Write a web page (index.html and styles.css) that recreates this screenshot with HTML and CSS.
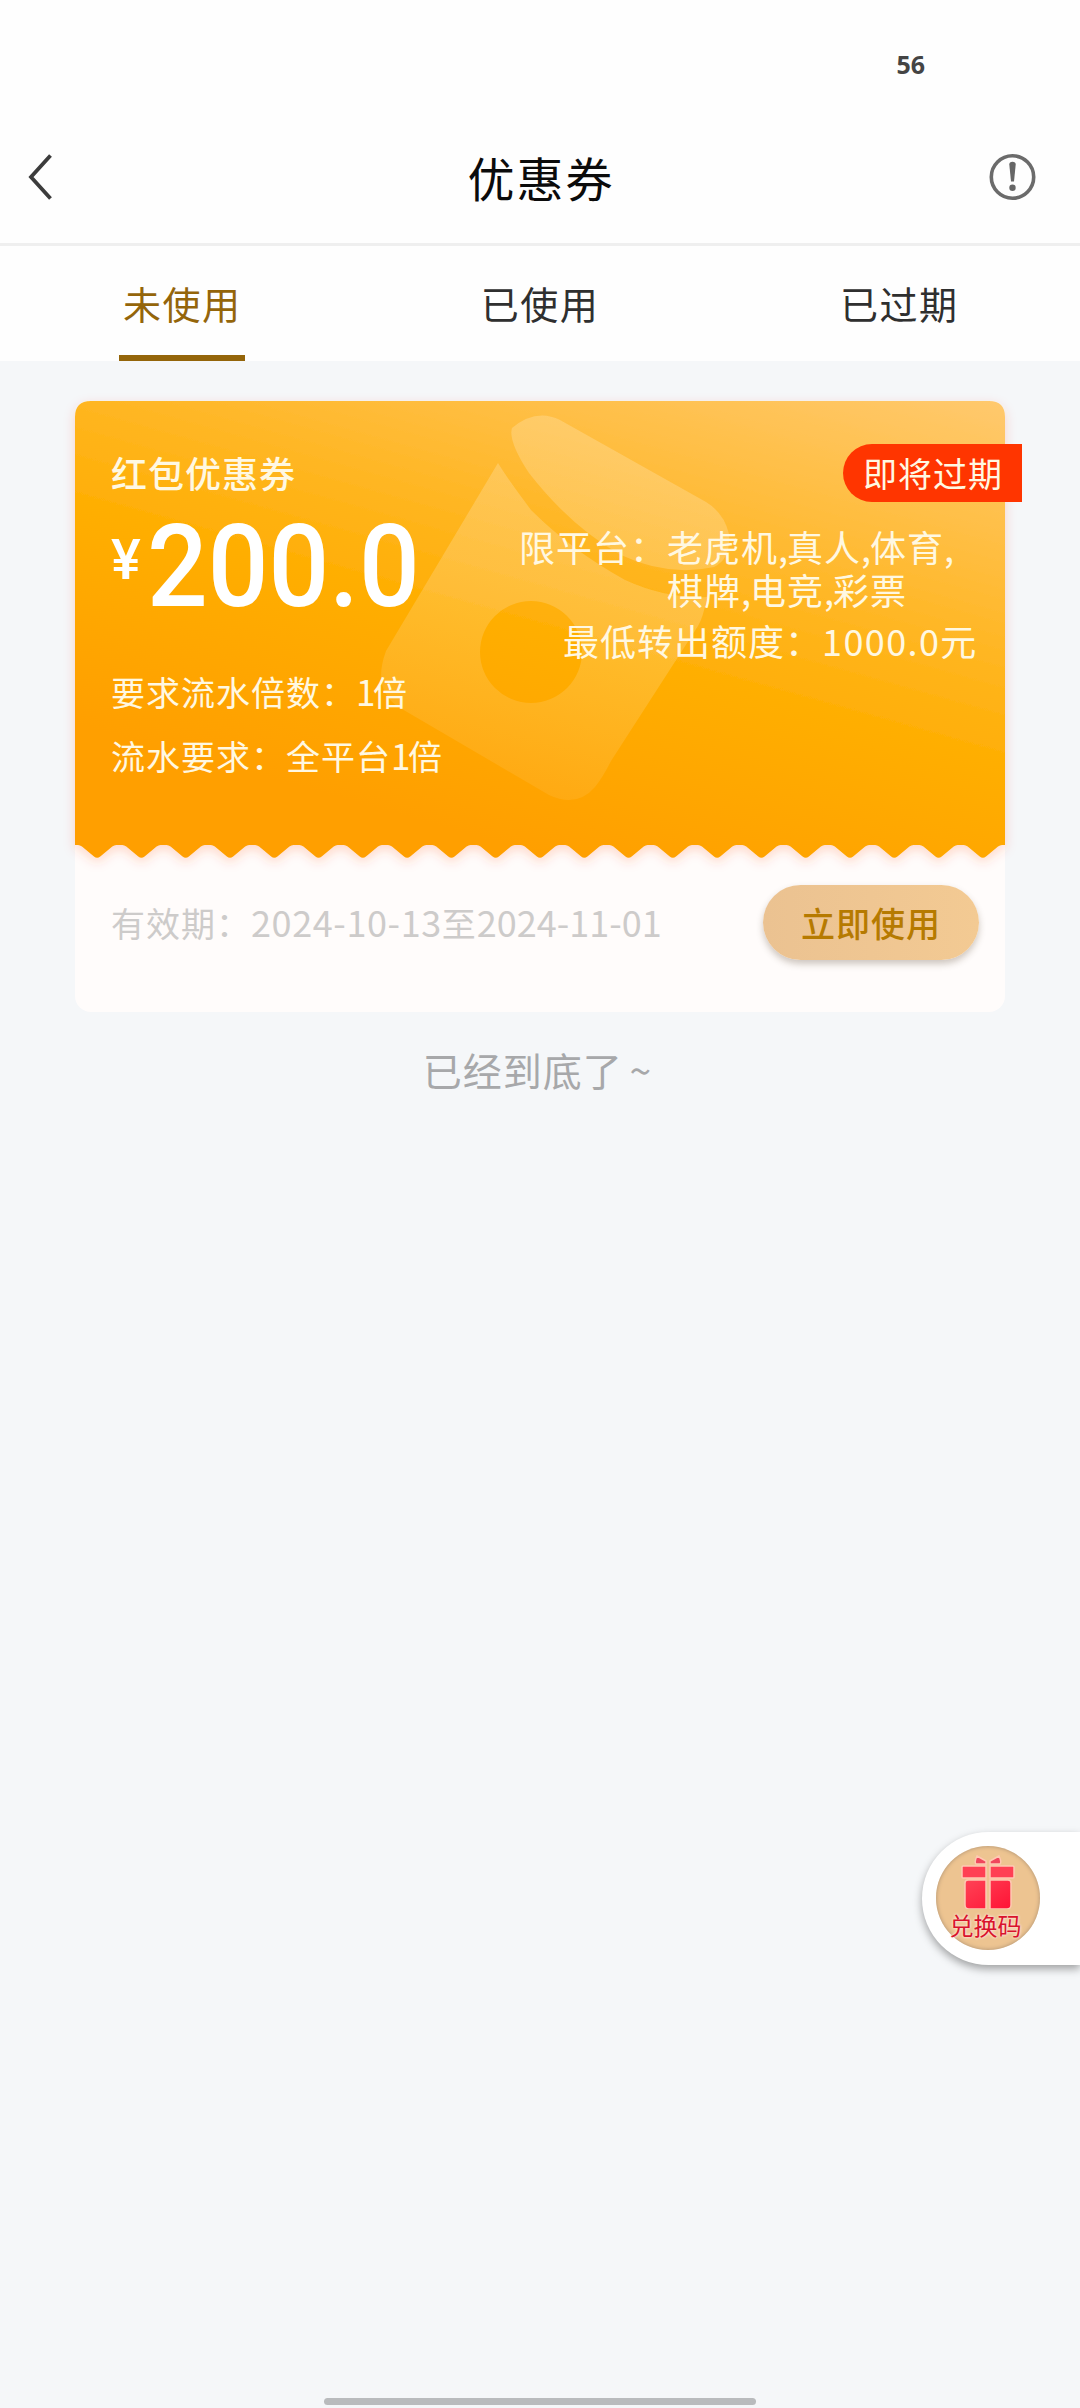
FILE: index.html
```html
<!DOCTYPE html>
<html lang="zh-CN">
<head>
<meta charset="utf-8">
<title>优惠券</title>
<link rel="stylesheet" href="styles.css">
</head>
<body>
<div class="status"><span class="status-value">56</span></div>
<header class="nav">
  <svg class="back" width="26" height="50" viewBox="0 0 26 50"><path d="M23.500 3.500 4 25 23.500 46.500" fill="none" stroke="#3c3c3c" stroke-width="3.800"/></svg>
  <h1 class="nav-title">优惠券</h1>
  <svg class="info" width="50" height="50" viewBox="0 0 50 50"><circle cx="25.500" cy="25" r="21.200" fill="none" stroke="#6b6b6b" stroke-width="3.600"/><path d="M22.300 12.500Q22.300 9.800 25.500 9.800T28.700 12.500L27 29.500H24Z" fill="#666"/><circle cx="25.500" cy="35.800" r="3.200" fill="#666"/></svg>
</header>
<nav class="tabs">
  <a class="tab tab-active"><span>未使用</span></a>
  <a class="tab"><span>已使用</span></a>
  <a class="tab"><span>已过期</span></a>
</nav>
<main class="list">
  <article class="coupon">
    <div class="face">
      <svg class="art" width="960" height="500" viewBox="60 386 960 500">
        <defs>
          <linearGradient id="face" gradientUnits="userSpaceOnUse" x1="1005" y1="401" x2="820" y2="1061">
            <stop offset="0" stop-color="#ffc96e"/><stop offset=".515" stop-color="#ffae02"/><stop offset=".82" stop-color="#ff9f00"/>
          </linearGradient>
          <linearGradient id="env" gradientUnits="userSpaceOnUse" x1="600" y1="416" x2="500" y2="800">
            <stop offset="0" stop-color="#fff" stop-opacity=".2"/><stop offset=".45" stop-color="#ffe2b0" stop-opacity=".28"/><stop offset="1" stop-color="#ffe2b0" stop-opacity=".09"/>
          </linearGradient>
          <filter id="glow" x="-5%" y="-5%" width="110%" height="112%"><feDropShadow dx="0" dy="4" stdDeviation="6" flood-color="#ff4a10" flood-opacity=".2"/></filter>
        </defs>
        <path filter="url(#glow)" fill="url(#face)" d="M75 845V417Q75 401 91 401H989Q1005 401 1005 417V845
          h-3q-2 0-4 1.500l-12 10q-3.143 2.600-6.286 0l-12-10q-2-1.500-4-1.500h-3
          h-3q-2 0-4 1.500l-12 10q-3.143 2.600-6.286 0l-12-10q-2-1.500-4-1.500h-3
          h-3q-2 0-4 1.500l-12 10q-3.143 2.600-6.286 0l-12-10q-2-1.500-4-1.500h-3
          h-3q-2 0-4 1.500l-12 10q-3.143 2.600-6.286 0l-12-10q-2-1.500-4-1.500h-3
          h-3q-2 0-4 1.500l-12 10q-3.143 2.600-6.286 0l-12-10q-2-1.500-4-1.500h-3
          h-3q-2 0-4 1.500l-12 10q-3.143 2.600-6.286 0l-12-10q-2-1.500-4-1.500h-3
          h-3q-2 0-4 1.500l-12 10q-3.143 2.600-6.286 0l-12-10q-2-1.500-4-1.500h-3
          h-3q-2 0-4 1.500l-12 10q-3.143 2.600-6.286 0l-12-10q-2-1.500-4-1.500h-3
          h-3q-2 0-4 1.500l-12 10q-3.143 2.600-6.286 0l-12-10q-2-1.500-4-1.500h-3
          h-3q-2 0-4 1.500l-12 10q-3.143 2.600-6.286 0l-12-10q-2-1.500-4-1.500h-3
          h-3q-2 0-4 1.500l-12 10q-3.143 2.600-6.286 0l-12-10q-2-1.500-4-1.500h-3
          h-3q-2 0-4 1.500l-12 10q-3.143 2.600-6.286 0l-12-10q-2-1.500-4-1.500h-3
          h-3q-2 0-4 1.500l-12 10q-3.143 2.600-6.286 0l-12-10q-2-1.500-4-1.500h-3
          h-3q-2 0-4 1.500l-12 10q-3.143 2.600-6.286 0l-12-10q-2-1.500-4-1.500h-3
          h-3q-2 0-4 1.500l-12 10q-3.143 2.600-6.286 0l-12-10q-2-1.500-4-1.500h-3
          h-3q-2 0-4 1.500l-12 10q-3.143 2.600-6.286 0l-12-10q-2-1.500-4-1.500h-3
          h-3q-2 0-4 1.500l-12 10q-3.143 2.600-6.286 0l-12-10q-2-1.500-4-1.500h-3
          h-3q-2 0-4 1.500l-12 10q-3.143 2.600-6.286 0l-12-10q-2-1.500-4-1.500h-3
          h-3q-2 0-4 1.500l-12 10q-3.143 2.600-6.286 0l-12-10q-2-1.500-4-1.500h-3
          h-3q-2 0-4 1.500l-12 10q-3.143 2.600-6.286 0l-12-10q-2-1.500-4-1.500h-3
          h-3q-2 0-4 1.500l-12 10q-3.143 2.600-6.286 0l-12-10q-2-1.500-4-1.500h-3Z"/>
        <path d="M512 428Q536 408 560 420L706 502Q724 513 729 534Q731 559 714 567Q668 577 621 555Q571 527 529 473Q508 441 512 428Z" fill="url(#env)"/>
        <path fill-rule="evenodd" d="M498 463 386 651Q371 692 402 709L549 795Q577 808 595 787Q603 777 611 761L698 626Q703 618 707 597Q667 599 625 580Q571 550 531 510Q507 478 498 463ZM480 652A51 51 0 1 0 582 652A51 51 0 1 0 480 652Z" fill="url(#env)"/>
      </svg>
      <div class="left">
        <h2 class="name">红包优惠券</h2>
        <p class="amount"><span class="yen">¥</span><span class="value">200.0</span></p>
        <p class="rule">要求流水倍数：<b>1</b>倍</p>
        <p class="rule rule-last">流水要求：全平台<b>1</b>倍</p>
      </div>
      <div class="right">
        <div class="limit"><span>限平台：</span><span>老虎机<i>,</i>真人<i>,</i>体育<i>,</i><br>棋牌<i>,</i>电竞<i>,</i>彩票</span></div>
        <p class="minimum">最低转出额度：<b>1000.0</b>元</p>
      </div>
      <span class="badge">即将过期</span>
    </div>
    <div class="foot">
      <span class="valid">有效期：<b>2024-10-13</b>至<b class="until">2024-11-01</b></span>
      <button class="use">立即使用</button>
    </div>
  </article>
  <p class="end">已经到底了 ~</p>
</main>
<aside class="redeem">
  <div class="redeem-disc">
    <svg width="60" height="54" viewBox="0 0 60 54">
      <defs><linearGradient id="gift" x1="0" y1="0" x2="1" y2="1"><stop offset="0" stop-color="#ff4356"/><stop offset="1" stop-color="#ff1335"/></linearGradient></defs>
      <g stroke="#ffc8b2" stroke-width="1.500">
        <path d="M19 1 28 6V9H18Q16 7 19 1ZM41 1 32 6V9H42Q44 7 41 1Z" fill="#f0475d"/>
        <path d="M5 11H28V23H5Q4 23 4 22V12Q4 11 5 11ZM32 11H55Q56 11 56 12V22Q56 23 55 23H32Z" fill="#ff4054"/>
        <path d="M10 25H28V54H11Q7 54 7 50V28Q7 25 10 25ZM32 25H50Q53 25 53 28V50Q53 54 49 54H32Z" fill="url(#gift)"/>
      </g>
    </svg>
    <span class="redeem-label">兑换码</span>
  </div>
</aside>
<div class="home-bar"></div>
</body>
</html>
```
FILE: styles.css
```css
* { box-sizing: border-box; margin: 0; padding: 0; }
body {
  position: relative;
  width: 1080px;
  height: 2408px;
  overflow: hidden;
  background: #f5f7f9;
  color: #2f2f2f;
  font-family: "Noto Sans CJK SC", sans-serif;
}
.status { height: 110px; background: #fefefe; padding: 48px 155px 0 0; text-align: right; }
.status-value { display: block; font: bold 25px/32px "Noto Sans", sans-serif; color: #444; }
.nav {
  height: 136px;
  padding: 0 43px 0 27px;
  display: grid;
  grid-template-columns: 60px 1fr 60px;
  align-items: center;
  background: #fefefe;
  border-bottom: 3px solid #efefef;
}
.nav svg { display: block; }
.info { justify-self: end; }
.nav-title { padding-left: 18px; text-align: center; font-size: 47px; font-weight: 400; line-height: 60px; letter-spacing: 2px; color: #0b0b0b; }
.tabs { display: grid; grid-template-columns: repeat(3, 1fr); height: 115px; padding: 0 1px; background: #fefefe; }
.tab { display: flex; justify-content: center; }
.tab span { height: 115px; line-height: 114px; font-size: 38px; letter-spacing: 1.5px; }
.tab-active span { width: 126px; margin-left: 3px; text-align: center; color: #94650a; border-bottom: 6px solid #94650a; }
.list { padding-top: 40px; }
.coupon { width: 930px; margin-left: 75px; background: #fffcfb; border-radius: 16px; }
.face { position: relative; height: 457px; display: flex; color: #fff8e2; }
.art { position: absolute; left: -15px; top: -15px; }
.left, .right { position: relative; }
.left { width: 400px; padding: 47px 0 0 36px; }
.name { font-size: 36px; line-height: 48px; font-weight: 500; letter-spacing: 1px; }
.amount { display: flex; height: 142px; font: 500 115px/141px Roboto, sans-serif; color: #fff; white-space: nowrap; }
.value { transform: scaleX(.93); transform-origin: 0 0; }
.yen { width: 36px; font-size: 56px; line-height: 129px; }
.rule { margin-top: 29px; font-size: 34px; line-height: 50px; letter-spacing: 1px; white-space: nowrap; }
.rule-last { margin-top: 14px; }
.rule b, .valid b, .minimum b { font-size: 36px; font-weight: 400; line-height: 1; }
.rule b { font-size: 35px; letter-spacing: -2.5px; }
.valid b { letter-spacing: .6px; }
.valid .until { letter-spacing: 0; }
.minimum b { letter-spacing: 1.4px; }
.right { width: 530px; padding-top: 124px; }
.limit { display: flex; margin-left: 44px; font-size: 36px; line-height: 43px; letter-spacing: 1px; white-space: nowrap; }
.limit i { font-style: normal; letter-spacing: -1px; }
.minimum { margin: 3px 0 0 88px; font-size: 36px; line-height: 52px; letter-spacing: 1px; white-space: nowrap; }
.badge {
  position: absolute;
  left: 768px;
  top: 43px;
  width: 179px;
  height: 58px;
  padding-left: 20px;
  border-radius: 29px 0 0 29px;
  background: #ff3500;
  font-size: 34px;
  line-height: 57px;
  letter-spacing: 1px;
}
.foot { height: 154px; padding: 27px 26px 0 36px; display: flex; justify-content: space-between; align-items: flex-start; }
.valid { font-size: 34px; line-height: 76px; letter-spacing: 1px; color: #cdcbca; white-space: nowrap; }
.use {
  width: 216px;
  height: 75px;
  border: 0;
  border-radius: 38px;
  background: linear-gradient(90deg, #ebc291, #f3ca93);
  box-shadow: 0 4px 7px rgba(70, 50, 30, .27);
  color: #b67a00;
  font: 500 34px/74px "Noto Sans CJK SC", sans-serif;
  letter-spacing: 1px;
}
.end { margin-top: 27px; padding-right: 5px; text-align: center; font-size: 39px; line-height: 60px; letter-spacing: 1px; word-spacing: -3px; color: #a7a8aa; }
.redeem {
  position: absolute;
  right: 0;
  top: 1832px;
  width: 158px;
  height: 133px;
  padding: 14px;
  border-radius: 67px 0 0 67px;
  background: #fff;
  box-shadow: 0 4px 9px rgba(0, 0, 0, .35);
}
.redeem-disc {
  width: 104px;
  height: 104px;
  border-radius: 50%;
  display: flex;
  flex-direction: column;
  align-items: center;
  background: #edc491;
  box-shadow: inset 0 0 4px #a98e70;
  padding-top: 9px;
}
.redeem-disc svg { display: block; height: 54px; flex: none; }
.redeem-label { margin-left: -5px; font-size: 24px; line-height: 32px; color: #d9132c; text-shadow: 0 0 3px #ffe3db, 0 0 3px #ffe3db; white-space: nowrap; }
.home-bar { position: absolute; left: 324px; top: 2398px; width: 432px; height: 7px; border-radius: 4px; background: #b9bbbd; }
```
